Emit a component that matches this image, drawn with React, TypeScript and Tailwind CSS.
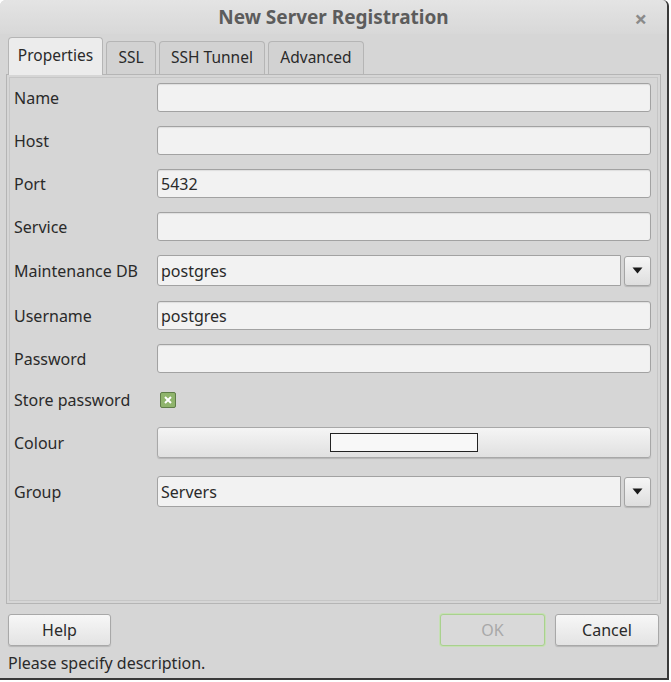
import React from 'react';

const font = { fontFamily: '"Noto Sans", "DejaVu Sans", sans-serif' };

const Field: React.FC<{ value?: string }> = ({ value }) => (
  <div className="flex-1 h-[29px] rounded-[3px] border border-[#a2a2a2] bg-[#f2f2f2] px-[3px] flex items-center text-[16px] text-[#2a2a2a] shadow-[inset_0_1px_1px_rgba(0,0,0,0.08)]">
    {value}
  </div>
);

const Combo: React.FC<{ value: string }> = ({ value }) => (
  <div className="flex-1 flex items-center gap-[3px]">
    <div className="flex-1 h-[31px] border border-[#a2a2a2] bg-[#f2f2f2] px-[3px] flex items-center text-[16px] text-[#2a2a2a] rounded-l-[3px]">
      {value}
    </div>
    <div className="w-[27px] h-[30px] rounded-[3px] border border-[#a5a5a5] bg-gradient-to-b from-[#f6f6f6] to-[#dedede] flex items-center justify-center shadow-[0_1px_1px_rgba(0,0,0,0.15)]">
      <svg width="11" height="7" viewBox="0 0 11 7">
        <path d="M0.5 0.5 H10.5 L5.5 6.5 Z" fill="#1a1a1a" />
      </svg>
    </div>
  </div>
);

const Row: React.FC<{ label: string; className?: string; children: React.ReactNode }> = ({ label, className, children }) => (
  <div className={`flex items-center ${className ?? ''}`}>
    <div className="w-[143px] text-[16px] text-[#2a2a2a]">{label}</div>
    {children}
  </div>
);

const Tab: React.FC<{ label: string; active?: boolean; w: string }> = ({ label, active, w }) =>
  active ? (
    <div className={`${w} h-[38px] -mb-px z-10 rounded-t-[4px] border border-b-0 border-[#b5b5b5] bg-[#ececec] flex items-center justify-center text-[15.5px] text-[#2a2a2a] pb-[2px]`}>
      {label}
    </div>
  ) : (
    <div className={`${w} h-[33px] rounded-t-[4px] border border-b-0 border-[#b5b5b5] bg-[#d2d2d2] flex items-center justify-center text-[15.5px] text-[#2a2a2a]`}>
      {label}
    </div>
  );

const Btn: React.FC<{ label: string; w: string; disabled?: boolean }> = ({ label, w, disabled }) => (
  <div
    className={`${w} h-[32px] rounded-[3px] border flex items-center justify-center text-[16px] ${
      disabled
        ? 'border-[#a9d18e] bg-[#d9d9d9] text-[#a8a8a8] shadow-[0_0_0_1px_#c6e0b4]'
        : 'border-[#a8a8a8] bg-gradient-to-b from-[#f7f7f7] to-[#e3e3e3] text-[#2a2a2a] shadow-[0_1px_1px_rgba(0,0,0,0.15)]'
    }`}
  >
    {label}
  </div>
);

export default function App() {
  return (
    <div className="w-[671px] h-[682px] bg-white" style={font}>
      <div className="w-[669px] h-[680px] bg-[#d6d6d6] rounded-t-[6px] border-r-2 border-b-2 border-[#3a3a3a] flex flex-col">
        <div className="h-[34px] relative flex items-center justify-center rounded-t-[6px] bg-gradient-to-b from-[#e4e4e4] to-[#d8d8d8]">
          <span className="text-[19px] font-bold text-[#5c5c5c]">New Server Registration</span>
          <span className="absolute right-[20px] top-[2px] text-[22px] font-bold text-[#8a8a8a]">×</span>
        </div>
        <div className="flex items-end gap-[3px] pl-[8px] h-[40px]">
          <Tab label="Properties" active w="w-[95px]" />
          <Tab label="SSL" w="w-[50px]" />
          <Tab label="SSH Tunnel" w="w-[106px]" />
          <Tab label="Advanced" w="w-[96px]" />
        </div>
        <div className="mx-[6px] h-[530px] border border-[#b5b5b5] p-[2px]">
          <div className="h-full border border-[#c6c6c6] pl-[4px] pr-[6px] pt-[5px] flex flex-col">
            <Row label="Name"><Field /></Row>
            <Row label="Host" className="mt-[14px]"><Field /></Row>
            <Row label="Port" className="mt-[14px]"><Field value="5432" /></Row>
            <Row label="Service" className="mt-[14px]"><Field /></Row>
            <Row label="Maintenance DB" className="mt-[14px]"><Combo value="postgres" /></Row>
            <Row label="Username" className="mt-[15px]"><Field value="postgres" /></Row>
            <Row label="Password" className="mt-[14px]"><Field /></Row>
            <Row label="Store password" className="mt-[15px]">
              <div className="ml-[3px] w-[16px] h-[16px] rounded-[2px] border border-[#5f7d48] bg-[#8fb46c] flex items-center justify-center">
                <svg width="8" height="8" viewBox="0 0 8 8">
                  <path d="M1 1 L7 7 M7 1 L1 7" stroke="#fff" strokeWidth="2" />
                </svg>
              </div>
            </Row>
            <Row label="Colour" className="mt-[15px]">
              <div className="flex-1 h-[31px] rounded-[3px] border border-[#a8a8a8] bg-gradient-to-b from-[#f5f5f5] to-[#e0e0e0] flex items-center justify-center shadow-[0_1px_1px_rgba(0,0,0,0.15)]">
                <div className="w-[148px] h-[19px] border border-[#222] bg-[#f8f8f8]" />
              </div>
            </Row>
            <Row label="Group" className="mt-[18px]"><Combo value="Servers" /></Row>
          </div>
        </div>
        <div className="flex items-center px-[8px] mt-[10px]">
          <Btn label="Help" w="w-[103px]" />
          <div className="flex-1" />
          <Btn label="OK" w="w-[105px]" disabled />
          <div className="w-[10px]" />
          <Btn label="Cancel" w="w-[104px]" />
        </div>
        <div className="px-[8px] mt-[5px] text-[16px] text-[#2a2a2a]">Please specify description.</div>
      </div>
    </div>
  );
}
